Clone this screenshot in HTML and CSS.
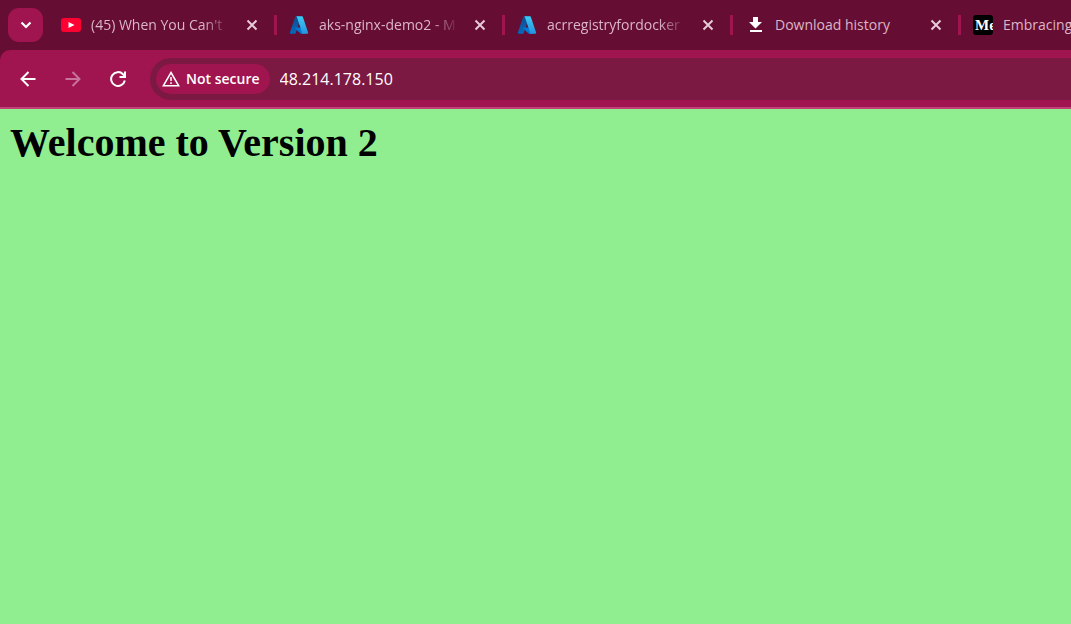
FILE: index.html
```html
<!DOCTYPE html>
<html lang="en">
<head>
<meta charset="utf-8">
<title>Welcome to Version 2</title>
<link rel="stylesheet" href="styles.css">
</head>
<body>
<svg class="defs" aria-hidden="true">
  <defs>
    <linearGradient id="azure-dark" x1="0" y1="0" x2="0" y2="1"><stop offset="0" stop-color="#114a8b"/><stop offset="1" stop-color="#0669bc"/></linearGradient>
    <linearGradient id="azure-light" x1="0" y1="0" x2="0" y2="1"><stop offset="0" stop-color="#3ccbf4"/><stop offset="1" stop-color="#2892df"/></linearGradient>
    <symbol id="azure" viewBox="0 0 96 96">
      <path fill="url(#azure-dark)" d="M33.3 6.5h26L32.300 86.600a4.200 4.200 0 0 1-3.900 2.800H8.100a4.200 4.200 0 0 1-3.900-5.500L29.400 9.400a4.200 4.200 0 0 1 3.900-2.900z"/>
      <path fill="#0078d4" d="M71.200 60.300H29.900a1.900 1.900 0 0 0-1.300 3.300l26.500 24.700a4.200 4.200 0 0 0 2.900 1.100h23.300z"/>
      <path fill="url(#azure-light)" d="M66.600 9.400a4.200 4.200 0 0 0-3.900-2.900H33.600a4.200 4.200 0 0 1 4 2.900l25.100 74.500a4.200 4.200 0 0 1-4 5.500h29.100a4.200 4.200 0 0 0 3.900-5.500z"/>
    </symbol>
    <symbol id="close" viewBox="0 0 12 12"><path d="M1.500 1.500l9 9m0-9l-9 9" fill="none" stroke="currentColor" stroke-width="2"/></symbol>
  </defs>
</svg>
<header class="browser">
  <div class="tab-strip">
    <button class="tab-search" aria-label="Search tabs"><svg width="12" height="8" viewBox="0 0 12 8"><path d="M1.500 1.500L6 6l4.500-4.500" fill="none" stroke="currentColor" stroke-width="2.200"/></svg></button>
    <nav class="tabs" aria-label="Tabs">
      <div class="tab">
        <svg class="favicon" viewBox="0 0 20 20"><rect y="3" width="20" height="14" rx="3" fill="#ff0033"/><path d="M7.500 7l6 3-6 3z" fill="#fff"/></svg>
        <a class="tab-title fade" href="#">(45) When You Can't</a>
        <button class="close" aria-label="Close tab"><svg width="12" height="12"><use href="#close"/></svg></button>
      </div>
      <div class="tab">
        <svg class="favicon"><use href="#azure"/></svg>
        <a class="tab-title fade" href="#">aks-nginx-demo2 - M</a>
        <button class="close" aria-label="Close tab"><svg width="12" height="12"><use href="#close"/></svg></button>
      </div>
      <div class="tab">
        <svg class="favicon"><use href="#azure"/></svg>
        <a class="tab-title fade" href="#">acrregistryfordocker</a>
        <button class="close" aria-label="Close tab"><svg width="12" height="12"><use href="#close"/></svg></button>
      </div>
      <div class="tab">
        <svg class="favicon" viewBox="0 0 20 20"><path fill="#fff" d="M8 2h5v5h4l-6.500 6.500L4 7h4zM5 15h12v2H5z"/></svg>
        <a class="tab-title" href="#">Download history</a>
        <button class="close" aria-label="Close tab"><svg width="12" height="12"><use href="#close"/></svg></button>
      </div>
      <div class="tab">
        <span class="favicon medium">Me</span>
        <a class="tab-title" href="#">Embracing</a>
      </div>
    </nav>
  </div>
  <div class="toolbar">
    <button class="tool" aria-label="Back"><svg width="16" height="16" viewBox="0 0 16 16"><path d="M15.500 8H2M8.500 1L1.500 8l7 7"/></svg></button>
    <button class="tool" aria-label="Forward" disabled><svg width="16" height="16" viewBox="0 0 16 16"><path d="M.5 8H14M7.500 1l7 7-7 7"/></svg></button>
    <button class="tool" aria-label="Reload"><svg width="16" height="16" viewBox="0 0 16 16"><path d="M14.800 9.500A6.900 6.900 0 1 1 13 3.200L14.800 5M15 .5V6H9.500"/></svg></button>
    <div class="address-bar">
      <button class="security"><svg width="18" height="16" viewBox="0 0 18 16"><path d="M9 1.500L16.700 14.800H1.300z" fill="none" stroke="currentColor" stroke-width="1.500"/><path d="M9 6v4M9 11.300v1.700" stroke="currentColor" stroke-width="1.500"/></svg>Not secure</button>
      <input class="url" type="text" aria-label="Address" value="48.214.178.150">
    </div>
  </div>
</header>
<main class="page">
  <h1>Welcome to Version 2</h1>
</main>
</body>
</html>
```
FILE: styles.css
```css
* { box-sizing: border-box; }
body {
  margin: 0;
  min-height: 100vh;
  display: flex;
  flex-direction: column;
  background: #90ee90;
  overflow-x: hidden;
}
.defs { position: absolute; width: 0; height: 0; }
button {
  display: flex;
  align-items: center;
  justify-content: center;
  padding: 0;
  border: 0;
  background: none;
  color: #fff;
  font: inherit;
}
.browser {
  background: #650d33;
  font-family: "Open Sans", "Noto Sans", sans-serif;
}
.tab-strip {
  display: flex;
  align-items: center;
  height: 50px;
  padding-left: 8px;
  overflow: hidden;
}
.tab-search {
  flex: none;
  width: 35px;
  height: 34px;
  margin-right: 6px;
  border-radius: 11px;
  background: #a0144f;
}
.tabs { display: flex; }
.tab {
  flex: none;
  display: flex;
  align-items: center;
  width: 228px;
  height: 20px;
  padding: 0 16px 0 12px;
  border-right: 3px solid #a0144f;
}
.favicon { flex: none; width: 20px; height: 20px; margin-right: 10px; }
.medium {
  padding-left: 2px;
  border-radius: 3px;
  overflow: hidden;
  background: #000;
  color: #fff;
  font: bold 15px/20px "Liberation Serif", serif;
}
.tab-title {
  flex: 1;
  overflow: hidden;
  white-space: nowrap;
  color: #dcb5c7;
  font-size: 14px;
  line-height: 20px;
  text-decoration: none;
}
.fade { -webkit-mask-image: linear-gradient(to right, #000 80%, transparent); mask-image: linear-gradient(to right, #000 80%, transparent); }
.close { flex: none; margin-left: 15px; color: #e8cbd8; }
.toolbar {
  display: flex;
  align-items: center;
  height: 59px;
  padding-left: 5px;
  border-bottom: 2px solid #c04278;
  border-top-left-radius: 10px;
  background: #a0144f;
}
.tool { flex: none; width: 45px; height: 36px; }
.tool svg { fill: none; stroke: currentColor; stroke-width: 2; }
.tool:disabled { color: #c8739a; }
.address-bar {
  flex: 1;
  display: flex;
  align-items: center;
  height: 42px;
  margin-left: 10px;
  padding-left: 6px;
  border-radius: 21px 0 0 21px;
  background: #7b1943;
}
.security {
  flex: none;
  gap: 6px;
  height: 30px;
  padding: 0 10px 0 6px;
  border-radius: 15px;
  background: #a0144f;
  font-size: 14px;
  font-weight: 600;
}
.url {
  flex: 1;
  min-width: 0;
  margin-left: 10px;
  padding: 0;
  border: 0;
  outline: 0;
  background: none;
  color: #fff;
  font: 16px/24px "Open Sans", "Noto Sans", sans-serif;
}
.page { padding: 11px 10px; }
h1 {
  margin: 0;
  font: bold 40px/46px "Liberation Serif", "Times New Roman", serif;
}
```
